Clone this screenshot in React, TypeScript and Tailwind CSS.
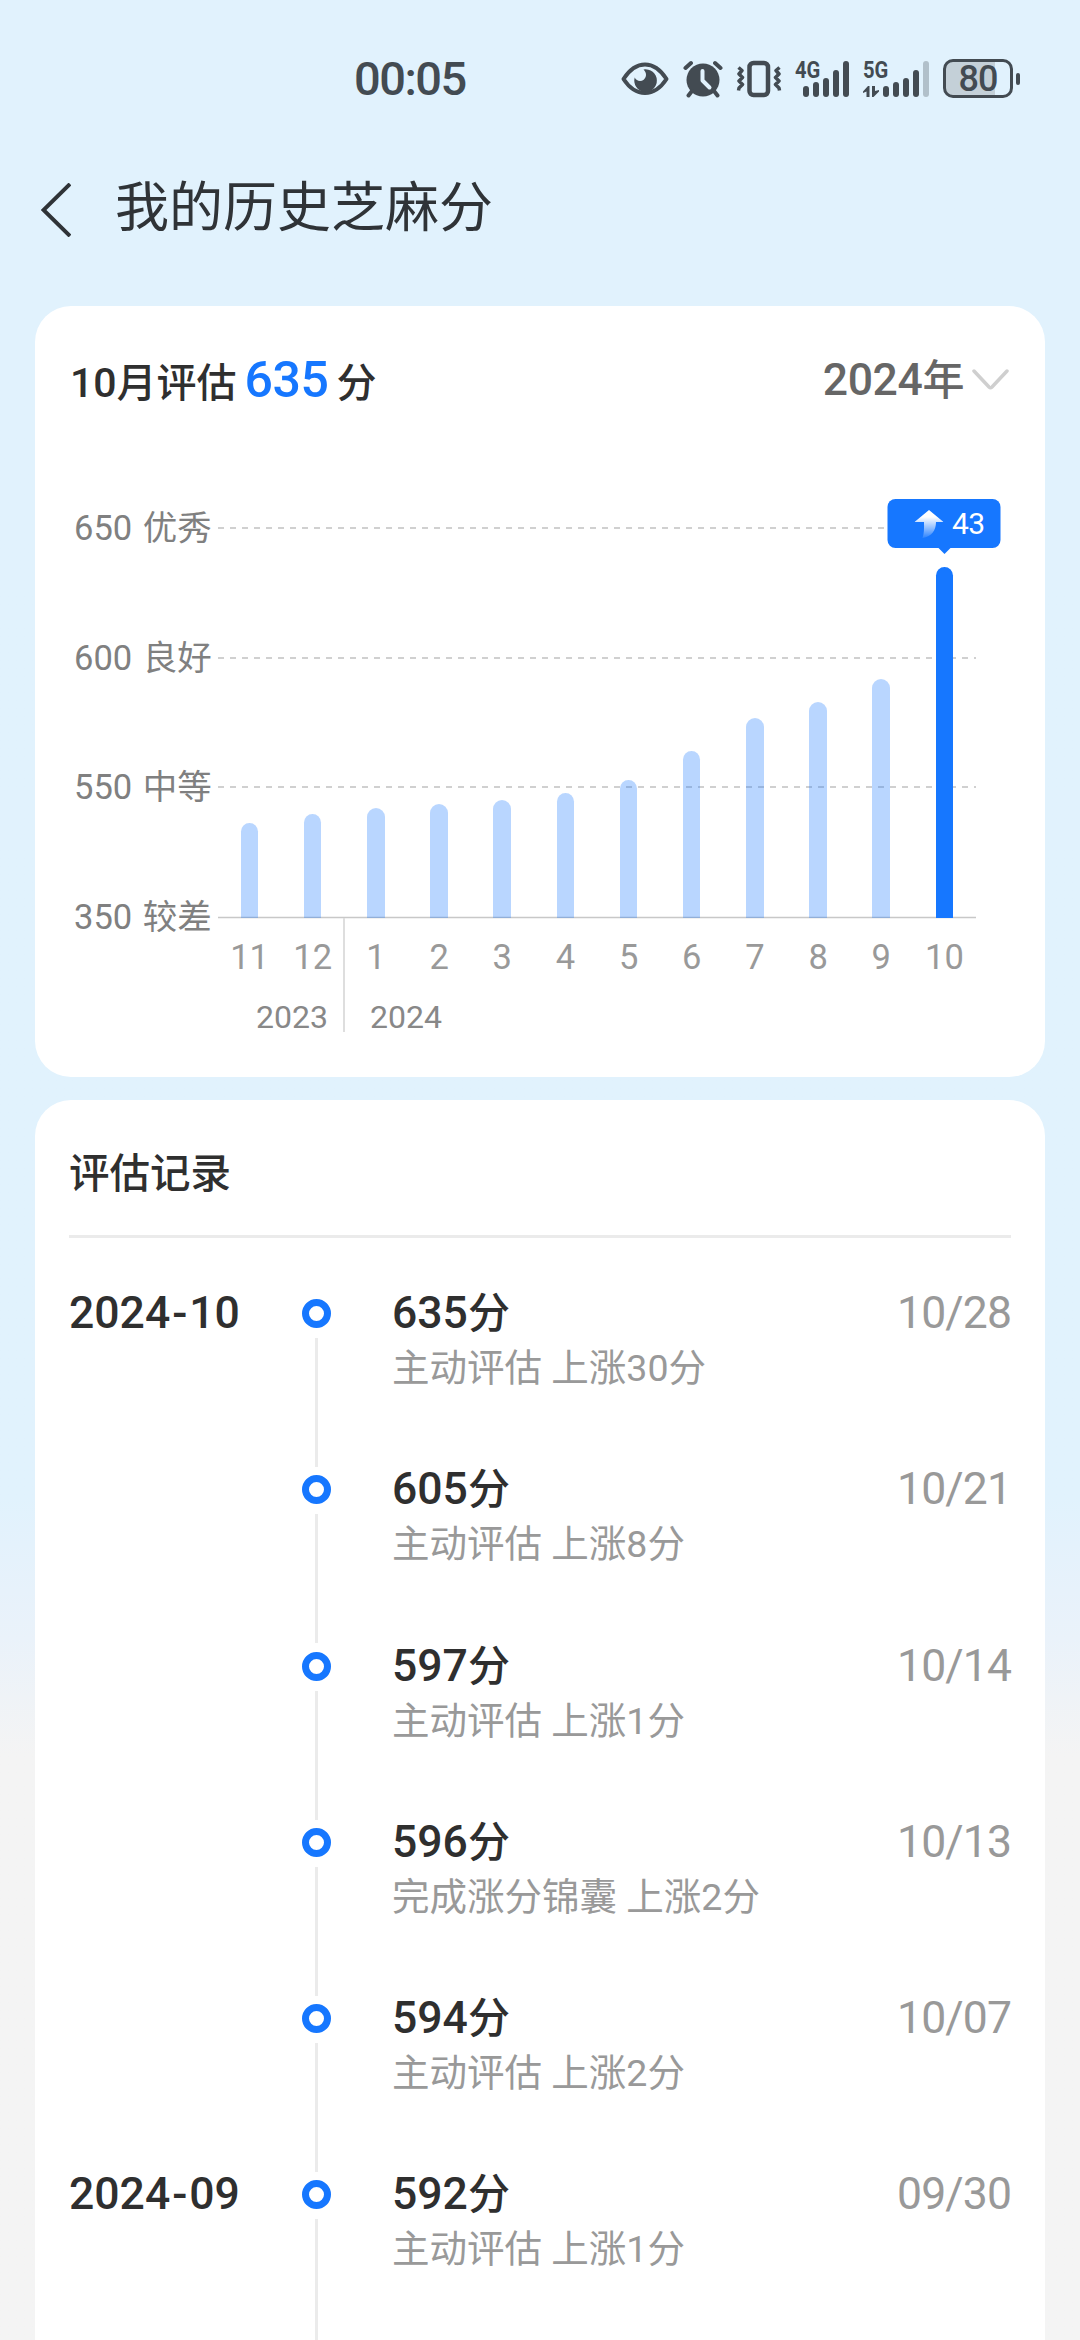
import type { ReactNode } from "react";

interface MonthScore {
  month: string;
  // bar height in px, the axis is not linear between grades
  height: number;
}

interface ScoreRecord {
  year?: string;
  month?: string;
  score: number;
  reason: string;
  date: string;
}

const MONTHS: MonthScore[] = [
  { month: "11", height: 95 },
  { month: "12", height: 104 },
  { month: "1", height: 110 },
  { month: "2", height: 114 },
  { month: "3", height: 118 },
  { month: "4", height: 125 },
  { month: "5", height: 138 },
  { month: "6", height: 167 },
  { month: "7", height: 200 },
  { month: "8", height: 216 },
  { month: "9", height: 239 },
  { month: "10", height: 351 },
];

const GRADES = ["650 优秀", "600 良好", "550 中等", "350 较差"];

const RECORDS: ScoreRecord[] = [
  { year: "2024", month: "10", score: 635, reason: "主动评估 上涨30分", date: "10/28" },
  { score: 605, reason: "主动评估 上涨8分", date: "10/21" },
  { score: 597, reason: "主动评估 上涨1分", date: "10/14" },
  { score: 596, reason: "完成涨分锦囊 上涨2分", date: "10/13" },
  { score: 594, reason: "主动评估 上涨2分", date: "10/07" },
  { year: "2024", month: "09", score: 592, reason: "主动评估 上涨1分", date: "09/30" },
];

function EyeIcon() {
  return (
    <svg width="48" height="34" viewBox="0 0 48 34" fill="none">
      <path d="M2.5 17C9 7 16 2.5 24 2.5S39 7 45.5 17C39 27 32 31 24 31S9 27 2.5 17Z" stroke="#434b52" strokeWidth="4" strokeLinejoin="round" />
      <path d="M22.5 7.5a11.3 11.3 0 1 1-8.8 8c1.5 3.5 6 4.5 9 2.2 3.3-2.7 3-7.3-.2-10.2Z" fill="#434b52" />
    </svg>
  );
}

function AlarmIcon() {
  return (
    <svg width="40" height="38" viewBox="0 0 40 38" fill="none">
      <circle cx="20" cy="20" r="16.5" fill="#434b52" />
      <path d="M2.5 8 8 3M37.5 8 32 3M9 31l-3.5 4.5M31 31l3.5 4.5" stroke="#434b52" strokeWidth="4" strokeLinecap="round" />
      <path d="M19.5 11v9.5l7 7" stroke="#e1f2fd" strokeWidth="4" strokeLinecap="round" strokeLinejoin="round" />
    </svg>
  );
}

function VibrateIcon() {
  return (
    <svg width="46" height="38" viewBox="0 0 46 38" fill="none" stroke="#434b52">
      <rect x="13.5" y="3" width="18.5" height="32" rx="4" strokeWidth="4.5" />
      <path
        d="M2.5 7.5 6 10.5 3 14l3.5 3.5L3 21l3.5 3.5L3 28l-.5 2.5M43.5 7.5 40 10.5 43 14l-3.5 3.5L43 21l-3.5 3.5L43 28l.5 2.5"
        strokeWidth="3.5"
        strokeLinejoin="round"
      />
    </svg>
  );
}

const SIGNAL_BARS = ["h-[11px]", "h-[15px]", "h-[19px]", "h-[27px]", "h-9"];

function Signal({ label, active, className }: { label: string; active: number; className: string }) {
  return (
    <div className={`relative flex h-9 items-end justify-end ${className}`}>
      <span className="absolute -top-[3px] left-0 origin-left scale-x-[0.84] text-[24px] leading-6 font-bold">{label}</span>
      {active < 5 && (
        <svg className="absolute bottom-0 left-0" width="16" height="11" viewBox="0 0 16 11" fill="#434b52">
          <path d="M0 5.5 5 0h1.5v11h-3V5.5L0 7ZM9 0h3v5l4-1v1.5L10.500 11H9Z" />
        </svg>
      )}
      <div className="flex items-end gap-1">
        {SIGNAL_BARS.map((h, i) => (
          <div key={h} className={`${h} w-[6px] rounded-full ${i < active ? "bg-[#434b52]" : "bg-[#b1c0ca]"}`} />
        ))}
      </div>
    </div>
  );
}

function StatusBar() {
  return (
    <div className="flex h-[156px] items-center pt-px pl-[354px] text-[#434b52]">
      <span className="w-[267px] text-[47px] leading-none font-medium tracking-[-1.5px]">00:05</span>
      <EyeIcon />
      <div className="ml-[14px]">
        <AlarmIcon />
      </div>
      <div className="ml-[13px]">
        <VibrateIcon />
      </div>
      <Signal label="4G" active={5} className="ml-[13px] w-[54px]" />
      <Signal label="5G" active={4} className="ml-[14px] w-[66px]" />
      <div className="ml-[14px] flex h-[39px] w-[70px] items-center justify-center rounded-[10px] border-[3px] border-[#434b52] bg-linear-to-r from-[#c4d0d8] from-77% to-transparent to-77% text-[36px] leading-none font-medium tracking-[-1px]">
        80
      </div>
      <div className="ml-[3px] h-3 w-1 rounded-full bg-[#434b52]" />
    </div>
  );
}

function Card({ className, children }: { className: string; children: ReactNode }) {
  return <section className={`mx-[35px] rounded-[36px] bg-white ${className}`}>{children}</section>;
}

function ScoreBadge() {
  return (
    <div className="absolute -top-[68px] left-1/2 flex h-[49px] w-[113px] -translate-x-1/2 items-center rounded-[8px] bg-[#1677ff] pl-[27px] text-[30px] text-white">
      <svg width="29" height="28" viewBox="0 0 29 28">
        <defs>
          <linearGradient id="arrow" x1="0" y1="0" x2="0" y2="1">
            <stop offset="0.25" stopColor="#fff" />
            <stop offset="1" stopColor="#fff" stopOpacity="0.1" />
          </linearGradient>
        </defs>
        <path d="M14.5 0 29 12h-7.5c0 8-4 14.5-13.5 16 1.5-4 1.7-9 1.5-16H0Z" fill="url(#arrow)" />
      </svg>
      <span className="ml-2 tracking-[-0.5px]">43</span>
      <div className="absolute -bottom-[6px] left-1/2 h-0 w-0 -translate-x-1/2 border-x-[7px] border-t-[7px] border-x-transparent border-t-[#1677ff]" />
    </div>
  );
}

function ScoreChart() {
  return (
    <div className="mt-[74px] flex">
      <div className="flex w-[183px] flex-col pl-[39px] text-[34.5px] text-[#808080]">
        {GRADES.map((grade) => (
          <div key={grade} className="flex h-[129.7px] items-start whitespace-nowrap">
            <span className="-mt-[26px] leading-[52px] [word-spacing:2px]">{grade}</span>
          </div>
        ))}
      </div>
      <div className="relative w-[758px]">
        {/* grade lines sit under the translucent bars */}
        <svg className="absolute top-0 left-0 overflow-visible" width="758" height="392" fill="none">
          {[0, 130, 259].map((y) => (
            <line key={y} x1="0" x2="758" y1={y} y2={y} stroke="#d0d0d0" strokeWidth="2" strokeDasharray="6 6" />
          ))}
          <line x1="0" x2="758" y1="389.5" y2="389.5" stroke="#c8c8c8" strokeWidth="1.5" />
        </svg>
        <div className="relative grid h-[390px] grid-cols-12 items-end">
          {MONTHS.map((m, i) => {
            const current = i === MONTHS.length - 1;
            return (
              <div
                key={m.month}
                className={`relative mx-auto w-[17.5px] rounded-t-full ${current ? "bg-[#1677ff]" : "bg-[#1677ff]/30"}`}
                style={{ height: m.height }}
              >
                {current && <ScoreBadge />}
              </div>
            );
          })}
        </div>
        <div className="grid grid-cols-12 pt-[18px] text-center text-[34.5px] leading-[42px] text-[#999]">
          {MONTHS.map((m) => (
            <span key={m.month}>{m.month}</span>
          ))}
        </div>
        <div className="mt-[20px] flex text-[32px] leading-[38px] text-[#888]">
          <span className="w-[110px] text-right">2023</span>
          <span className="ml-[42px]">2024</span>
        </div>
        <div className="absolute top-[390px] left-[125px] h-[114px] w-[2px] bg-[#dedede]" />
      </div>
    </div>
  );
}

function RecordRow({ record }: { record: ScoreRecord }) {
  return (
    <li className="flex h-[176.3px] text-[44.5px] leading-[52px]">
      <div className="w-[233px] font-medium text-[#2f2f2f]">
        {record.year && (
          <>
            {record.year}
            <span className="mx-[2px]">-</span>
            {record.month}
          </>
        )}
      </div>
      <div className="flex w-[29px] flex-col items-center">
        <div className="mt-[12px] size-[29px] shrink-0 rounded-full border-[7px] border-[#1677ff]" />
        <div className="mt-[10px] h-[129px] w-[3px] shrink-0 bg-[#ebebeb]" />
      </div>
      <div className="flex-1 pl-[61px]">
        <div className="font-medium text-[#2f2f2f]">
          {record.score}
          <span className="text-[42px]">分</span>
        </div>
        <div className="mt-[2px] text-[37.5px] text-[#999]">{record.reason}</div>
      </div>
      <div className="tracking-[-0.9px] text-[#999]">{record.date}</div>
    </li>
  );
}

export default function App() {
  return (
    <div className="h-[2340px] w-[1080px] overflow-hidden bg-linear-to-b from-[#e1f2fd] from-64% via-[#eaf2fa] via-70% to-[#f4f4f4] to-75% font-[Roboto,'Noto_Sans_CJK_SC',sans-serif]">
      <StatusBar />
      <header className="flex h-[150px] items-start pt-[13px]">
        <svg className="mt-[14px] ml-[41px]" width="30" height="54" viewBox="0 0 30 54" fill="none">
          <path d="M29 1 2.5 27 29 53" stroke="#2f3337" strokeWidth="4" />
        </svg>
        <h1 className="ml-[44px] text-[54px] leading-[80px] text-[#2f3337]">我的历史芝麻分</h1>
      </header>

      <Card className="h-[771px]">
        <div className="flex h-[148px] items-center justify-between pr-[36px] pl-[35px]">
          <div className="flex items-baseline text-[40px] font-medium text-[#2f2f2f]">
            <span className="text-[41px]">10</span>
            月评估
            <span className="mr-[8px] ml-[8px] text-[50px] tracking-[-0.5px] text-[#1677ff]">635</span>
            分
          </div>
          <div className="flex items-baseline text-[44.5px] font-medium tracking-[-0.4px] text-[#666]">
            2024
            <span className="text-[42px]">年</span>
            <svg className="ml-[8px] self-center" width="37" height="22" viewBox="0 0 37 22" fill="none">
              <path d="m2 2 15 16q1.5 1.5 3 0L35 2" stroke="#cfcfcf" strokeWidth="3.5" strokeLinecap="round" />
            </svg>
          </div>
        </div>
        <ScoreChart />
      </Card>

      <Card className="mt-[23px] h-[1400px] px-[34px]">
        <h2 className="h-[138px] border-b-[3px] border-[#ebebeb] pt-[44px] text-[40.5px] leading-[60px] font-medium text-[#2f2f2f]">
          评估记录
        </h2>
        <ul className="pt-[49px]">
          {RECORDS.map((r) => (
            <RecordRow key={r.date} record={r} />
          ))}
        </ul>
      </Card>
    </div>
  );
}
